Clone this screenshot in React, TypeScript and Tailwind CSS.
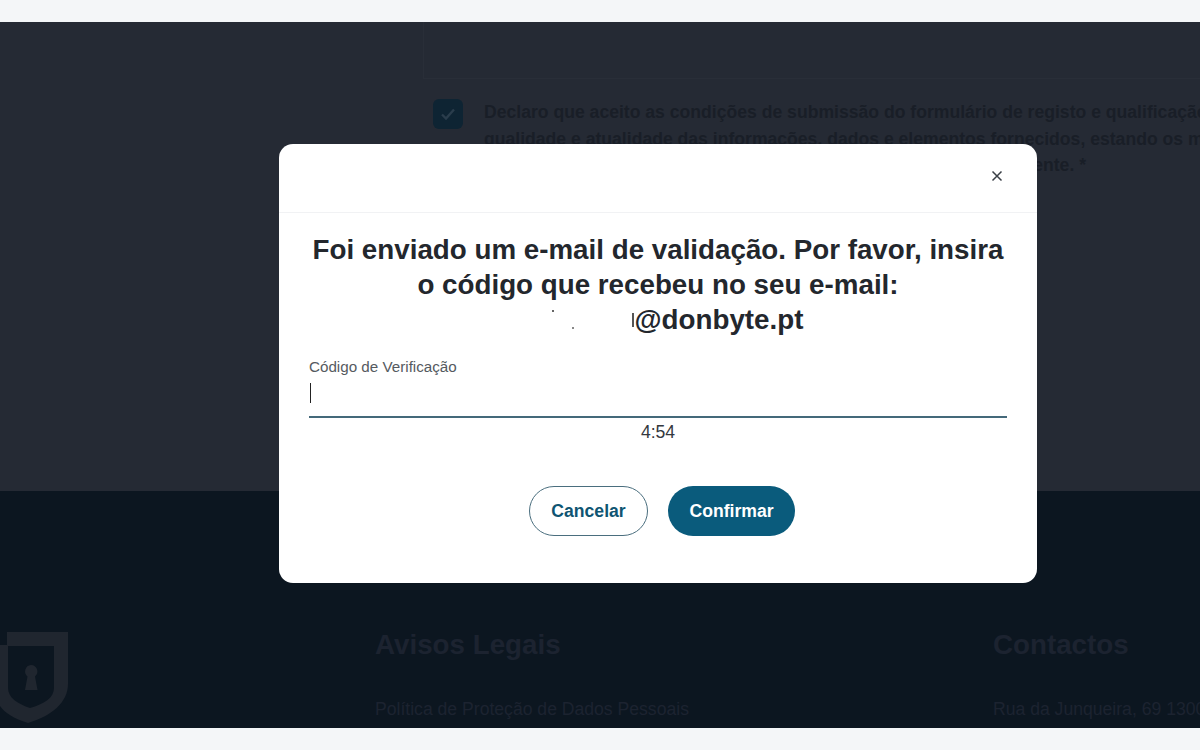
export default function App() {
  return (
    <div className="relative h-[750px] w-[1200px] overflow-hidden bg-[#f4f6f8] font-['Liberation_Sans',Arial,sans-serif]">
      <div className="flex h-full flex-col pb-[22px] pt-[22px]">
        <main className="h-[469px] overflow-hidden bg-[#252a34] pl-[423px]">
          <div className="h-[57px] border-b border-l border-[#292e38]" />
          <div className="flex gap-[21px] pl-[10px] pt-[20px]">
            <div className="flex h-[30px] w-[30px] shrink-0 items-center justify-center rounded-md bg-[#0e2433]">
              <svg width="20" height="20" viewBox="0 0 20 20" fill="none" stroke="#2a3d4c" strokeWidth="2.4">
                <path d="M4 10.5l4 4 8-9" />
              </svg>
            </div>
            <div className="whitespace-nowrap text-[17.6px] font-bold leading-[26.5px] text-[#191e27]">
              <p>Declaro que aceito as condições de submissão do formulário de registo e qualificação</p>
              <p>qualidade e atualidade das informações, dados e elementos fornecidos, estando os meus</p>
              <p className="w-[602px] text-right">atempadamente. *</p>
            </div>
          </div>
        </main>
        <footer className="flex h-[237px] overflow-hidden bg-[#0c1620]">
          <div className="w-[375px] shrink-0 pt-[141px]">
            <svg width="69" height="94" viewBox="0 0 69 94" fill="#20262f">
              <path fillRule="evenodd" d="M7 0H68V52C68 70 52 84 28 91C14 87 4 80 0 74V13H7ZM8 14V56C8 66 18 72 30 76C44 72 54 66 54 56V14Z" />
              <path d="M31 33a6.500 6.500 0 0 1 4 11.500l2.500 13.500H25l2.500-13.500A6.500 6.500 0 0 1 31 33Z" />
            </svg>
          </div>
          <div className="w-[618px] shrink-0 pt-[138px]">
            <h3 className="text-[27.75px] font-bold leading-[32px] text-[#1c2330]">Avisos Legais</h3>
            <p className="mt-[38px] text-[17.6px] leading-[20px] text-[#1c2330]">Política de Proteção de Dados Pessoais</p>
          </div>
          <div className="flex-1 whitespace-nowrap pt-[138px]">
            <h3 className="text-[27.75px] font-bold leading-[32px] text-[#1c2330]">Contactos</h3>
            <p className="mt-[38px] text-[17.6px] leading-[20px] text-[#1c2330]">Rua da Junqueira, 69 1300-344 Lisboa</p>
          </div>
        </footer>
      </div>

      <div className="absolute left-[279px] top-[144px] flex h-[439px] w-[758px] flex-col rounded-[14px] bg-white">
        <div className="flex h-[69px] shrink-0 items-start justify-end border-b border-[#f1f2f4] pr-[33px] pt-[25px]">
          <svg width="14" height="14" viewBox="0 0 14 14" fill="none" stroke="#3a3f46" strokeWidth="1.5">
            <path d="M2.500 2.500l9 9M11.500 2.500l-9 9" />
          </svg>
        </div>
        <div className="flex flex-1 flex-col px-[30px] pt-[19px]">
          <h2 className="text-center text-[27.75px] font-bold leading-[35px] text-[#23272d]">
            <span className="block whitespace-nowrap">Foi enviado um e-mail de validação. Por favor, insira</span>
            <span className="block">o código que recebeu no seu e-mail:</span>
            <span className="block">
              <span className="relative inline-block h-[20px] w-[122px]">
                <span className="absolute left-[39px] top-[1px] h-[2px] w-[2px] bg-[#666]" />
                <span className="absolute left-[59px] top-[18px] h-[2px] w-[2px] bg-[#888]" />
                <span className="absolute right-[1px] top-[4px] h-[14px] w-[2px] bg-[#555]" />
              </span>
              @donbyte.pt
            </span>
          </h2>
          <label className="mt-[20px] text-[15.2px] leading-[20px] text-[#555a60]">Código de Verificação</label>
          <div className="flex h-[41px] items-start border-b-2 border-[#44697a] pl-px pt-[6px]">
            <span className="h-[20px] w-px bg-[#222]" />
          </div>
          <div className="mt-[4px] text-center text-[17.6px] leading-[20px] text-[#34383e]">4:54</div>
          <div className="mt-[44px] flex justify-center gap-[20px] pl-[8px]">
            <button className="h-[50px] w-[119px] rounded-full border border-[#4a6e7e] bg-white text-[17.6px] font-bold text-[#0f5572]">Cancelar</button>
            <button className="h-[50px] w-[127px] rounded-full bg-[#0a5b7c] text-[17.6px] font-bold text-white">Confirmar</button>
          </div>
        </div>
      </div>
    </div>
  );
}
